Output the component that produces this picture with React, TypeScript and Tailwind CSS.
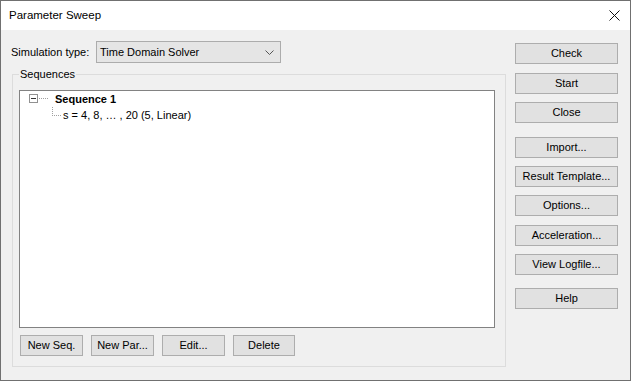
import React from "react"

const font = { fontFamily: '"Liberation Sans", Arial, sans-serif' }

function Btn({ label, className = "" }: { label: string; className?: string }) {
  return (
    <div
      className={`h-[21px] flex items-center justify-center bg-[#e1e1e1] border border-[#adadad] text-[11px] text-black ${className}`}
    >
      {label}
    </div>
  )
}

function TreeRoot() {
  return (
    <div className="flex items-center h-[16px]">
      <svg width="35" height="16" className="shrink-0">
        <rect x="9.5" y="3.5" width="8" height="8" fill="white" stroke="#919191" />
        <line x1="11" y1="7.5" x2="16" y2="7.5" stroke="#333" />
        {[19, 21, 23, 25, 27].map((x) => (
          <rect key={x} x={x} y="7" width="1" height="1" fill="#a0a0a0" />
        ))}
      </svg>
      <span className="font-bold text-[11px] leading-none">Sequence 1</span>
    </div>
  )
}

function TreeChild() {
  return (
    <div className="flex items-center h-[17px]">
      <svg width="43" height="17" className="shrink-0">
        {[0, 2, 4, 6].map((y) => (
          <rect key={y} x="32" y={y} width="1" height="1" fill="#a0a0a0" />
        ))}
        {[32, 34, 36, 38, 40].map((x) => (
          <rect key={x} x={x} y="8" width="1" height="1" fill="#a0a0a0" />
        ))}
      </svg>
      <span className="text-[11px] leading-none">s = 4, 8, … , 20 (5, Linear)</span>
    </div>
  )
}

export default function App() {
  return (
    <div
      style={font}
      className="w-[631px] h-[381px] border border-[#707070] bg-[#f0f0f0] flex flex-col text-black overflow-hidden"
    >
      <div className="h-[29px] bg-white flex items-center justify-between pl-[8px] pr-[10px] shrink-0">
        <span className="text-[11.5px]">Parameter Sweep</span>
        <svg width="11" height="11" viewBox="0 0 11 11">
          <path d="M0.5 0.5 L10.5 10.5 M10.5 0.5 L0.5 10.5" stroke="#111" strokeWidth="1" />
        </svg>
      </div>

      <div className="flex flex-1">
        {/* left side */}
        <div className="w-[505px] pl-[10px] pt-[11px] flex flex-col">
          <div className="flex items-center h-[22px]">
            <span className="w-[85px] text-[11px]">Simulation type:</span>
            <div className="w-[185px] h-[22px] bg-[#e5e5e5] border border-[#acacac] flex items-center justify-between pl-[3px] pr-[6px]">
              <span className="text-[11px]">Time Domain Solver</span>
              <svg width="9" height="5" viewBox="0 0 9 5">
                <path d="M0.5 0.5 L4.5 4.5 L8.5 0.5" stroke="#555" fill="none" strokeWidth="1" />
              </svg>
            </div>
          </div>

          <fieldset className="ml-[1px] mt-[4px] w-[494px] border border-[#dcdcdc] pl-[6px] pr-[10px] pb-[10px]">
            <legend className="px-[1px] text-[11px] leading-[14px]">Sequences</legend>
            <div className="mt-[9px] h-[238px] w-[476px] bg-white border border-[#828282]">
              <TreeRoot />
              <TreeChild />
            </div>
            <div className="flex gap-[8px] mt-[7px] ml-[1px]">
              <Btn label="New Seq." className="w-[63px]" />
              <Btn label="New Par..." className="w-[63px]" />
              <Btn label="Edit..." className="w-[63px]" />
              <Btn label="Delete" className="w-[62px]" />
            </div>
          </fieldset>
        </div>

        {/* right buttons */}
        <div className="ml-[9px] w-[103px] pt-[13px] flex flex-col">
          <Btn label="Check" />
          <Btn label="Start" className="mt-[9px]" />
          <Btn label="Close" className="mt-[8px]" />
          <Btn label="Import..." className="mt-[14px]" />
          <Btn label="Result Template..." className="mt-[8px]" />
          <Btn label="Options..." className="mt-[8px]" />
          <Btn label="Acceleration..." className="mt-[9px]" />
          <Btn label="View Logfile..." className="mt-[8px]" />
          <Btn label="Help" className="mt-[13px]" />
        </div>
      </div>
    </div>
  )
}
